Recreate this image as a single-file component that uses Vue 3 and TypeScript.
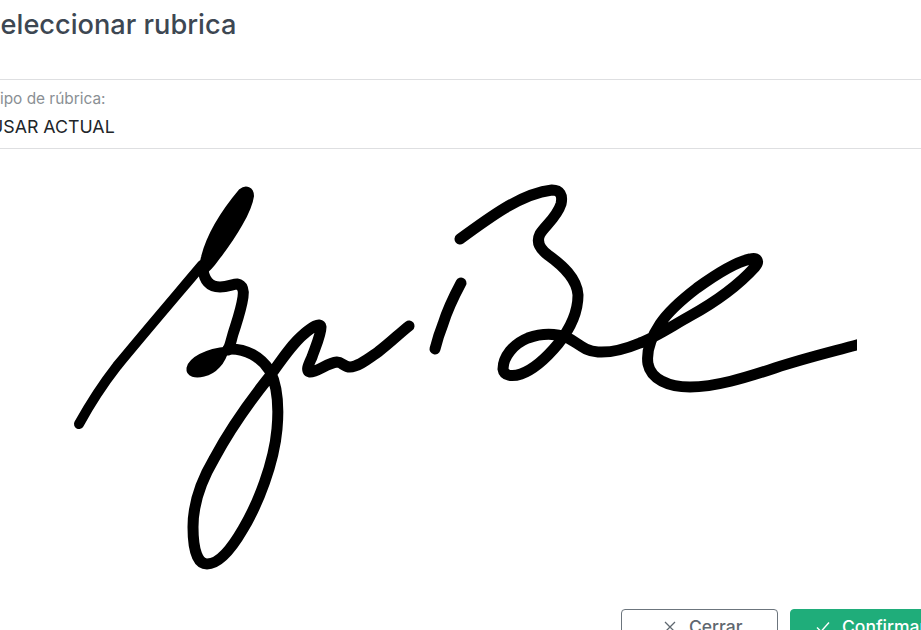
<script setup lang="ts">
const title = 'Seleccionar rubrica'
const label = 'Tipo de rúbrica:'
const value = 'USAR ACTUAL'
</script>

<template>
  <div class="viewport">
    <div class="modal">
      <header class="head">
        <h2 class="title">{{ title }}</h2>
      </header>
      <section class="field">
        <div class="label">{{ label }}</div>
        <div class="value">{{ value }}</div>
      </section>
      <div class="canvas">
        <svg class="sig" viewBox="0 150 921 450" width="921" height="450" aria-label="rubrica">
          <defs>
            <clipPath id="sigclip"><rect x="0" y="150" width="857" height="450" /></clipPath>
          </defs>
          <g clip-path="url(#sigclip)" fill="none" stroke="#000" stroke-width="11" stroke-linecap="round" stroke-linejoin="round">
            <path d="M79 425C90 405 103 385 117 367C145 333 175 298 202 266" stroke-width="10" />
            <path d="M202 258C207 238 219 216 240 191C246 186 253 189 253 197C251 212 236 237 219 259C214 266 208 273 204 275C200 270 200 265 202 258Z" fill="#000" stroke-width="2" />
            <path d="M203 270C204 281 209 288 220 288C228 288 233 285 237 285C243 286 244 292 243 298C241 312 236 325 233 335C231 342 230 347 228 351" />
            <path d="M228 349C205 351 190 360 188 369C187 377 196 378 204 376C215 374 224 364 228 349Z" fill="#000" stroke-width="3" />
            <path d="M228 350C246 349 261 358 270 372C277 386 279 408 277 430C274 464 258 505 243 530C232 549 219 565 207 565C198 565 193 552 193 528C193 505 201 482 214 460C230 430 250 402 270 377C282 360 292 345 304 335C312 328 320 323 321 328C321 336 315 349 312 358C309 365 305 372 310 373C318 373 327 364 337 363C342 363 344 368 350 368C358 368 368 360 378 353C390 344 400 334 409 327" />
            <path d="M461 284C453 299 447 312 443 325C439 335 437 342 435 350" />
            <path d="M460 240C475 229 490 218 505 209C520 200 535 193 552 191C560 191 563 196 561 205C557 218 545 227 540 235C536 243 540 250 548 256C562 266 577 279 578 296C578 312 570 330 558 345C548 357 535 370 521 375C512 378 504 377 503 370C503 358 513 345 528 339C545 333 558 335 568 339C578 344 584 352 598 353C614 354 628 349 640 344C656 338 672 327 690 317C710 306 735 290 755 268C760 262 757 258 750 260C735 263 715 276 697 289C680 302 668 313 660 325C652 337 646 352 648 365C651 380 668 388 690 388C715 388 745 379 775 369C805 359 835 352 860 345" />
          </g>
        </svg>
      </div>
      <footer class="foot">
        <button class="btn btn-close" type="button">
          <svg class="ico" viewBox="0 0 12 12" width="12" height="12"><path d="M1 1l10 10M11 1L1 11" fill="none" stroke="currentColor" stroke-width="1.3" /></svg>
          <span>Cerrar</span>
        </button>
        <button class="btn btn-ok" type="button">
          <svg class="ico" viewBox="0 0 14 12" width="14" height="12"><path d="M1 6.5l4 4 8-9" fill="none" stroke="currentColor" stroke-width="1.4" /></svg>
          <span>Confirmar</span>
        </button>
      </footer>
    </div>
  </div>
</template>

<style>
html, body { margin: 0; overflow: hidden; background: #fff; }
</style>

<style scoped>
.viewport {
  width: 921px;
  height: 630px;
  overflow: hidden;
  background: #fff;
  font-family: Inter, "Liberation Sans", sans-serif;
}
.modal {
  width: 1000px;
  margin-left: -10px;
}
.head {
  height: 79px;
  border-bottom: 1px solid #dedfe1;
}
.title {
  margin: 0 0 0 -7px;
  padding-top: 8px;
  font-size: 27.2px;
  line-height: 34px;
  font-weight: 500;
  color: #3d4752;
}
.field {
  height: 69px;
  border-bottom: 1px solid #dedfe1;
  padding-top: 10px;
  box-sizing: border-box;
}
.label {
  font-size: 15.4px;
  line-height: 18px;
  color: #8a8f94;
}
.value {
  margin-top: 8px;
  font-size: 17.8px;
  line-height: 22px;
  color: #212529;
}
.canvas {
  height: 460px;
  padding-left: 10px;
}
.sig { display: block; }
.foot {
  display: flex;
  gap: 12px;
  padding-left: 631px;
}
.btn {
  display: inline-flex;
  align-items: center;
  justify-content: flex-start;
  height: 36px;
  border-radius: 4px;
  font: 500 17.5px/22px Inter, "Liberation Sans", sans-serif;
  box-sizing: border-box;
  flex: none;
}
.btn-close {
  width: 157px;
  padding: 0 0 0 42px;
  gap: 13px;
  background: #fff;
  border: 1px solid #6c757d;
  color: #5f6870;
}
.btn-ok {
  width: 170px;
  padding: 0 0 0 25px;
  gap: 12px;
  background: #1fad7a;
  border: 1px solid #1fad7a;
  color: #fff;
}
</style>
